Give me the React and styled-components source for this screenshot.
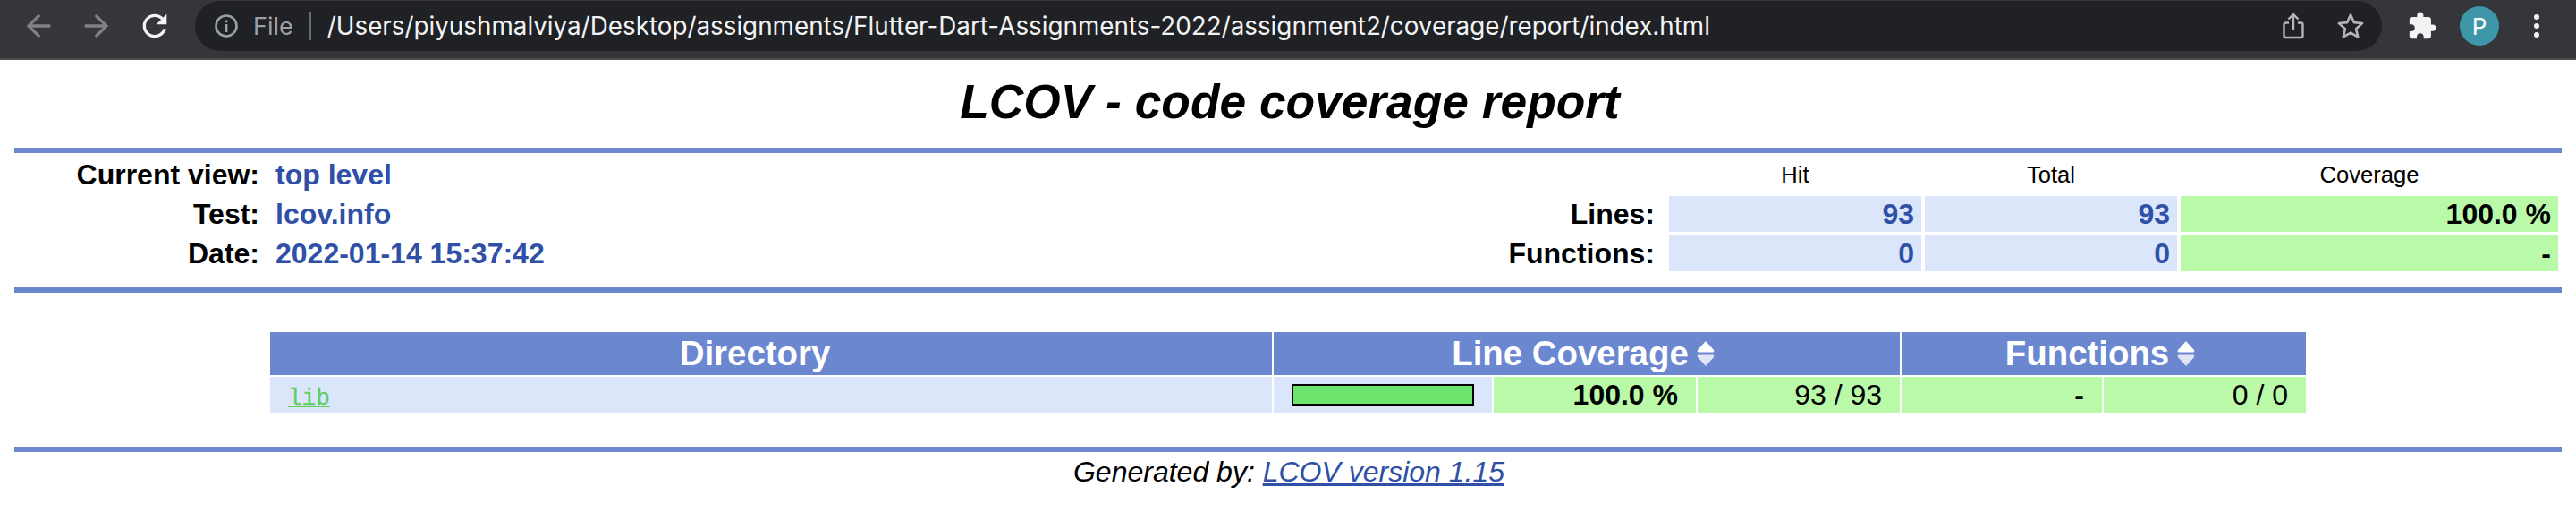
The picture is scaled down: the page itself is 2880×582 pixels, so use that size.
import React from "react";
import styled, { createGlobalStyle } from "styled-components";

const Global = createGlobalStyle`
  html, body { margin: 0; padding: 0; background: #fff; }
  body { font-family: "Liberation Sans", Arial, sans-serif; font-size: 32px; color: #000; }
`;

const C = {
  rule: "#6b87d0",
  light: "#dbe6fb",
  green: "#baf9a8",
  value: "#2f50a6",
};

/* ---------- browser toolbar ---------- */
const Toolbar = styled.header`
  display: flex;
  align-items: flex-start;
  height: 65px;
  background: #35363a;
  border-bottom: 2px solid #4a4b4e;
`;
const Nav = styled.nav`
  display: flex;
  align-items: center;
  gap: 25px;
  height: 58px;
  padding-left: 23px;
  width: 218px;
  box-sizing: border-box;
  flex: none;
`;
const NavIcon = styled.svg`
  width: 40px;
  height: 40px;
  flex: none;
  fill: ${(p) => (p.$on ? "#f1f3f4" : "#7f8184")};
`;
const Omnibox = styled.div`
  display: flex;
  align-items: center;
  width: 2445px;
  height: 56px;
  margin-top: 1px;
  flex: none;
  box-sizing: border-box;
  padding-left: 21px;
  border-radius: 28px;
  background: #202124;
`;
const InfoIcon = styled.svg`
  width: 28px;
  height: 28px;
  flex: none;
  color: #9aa0a6;
`;
const Scheme = styled.span`
  margin-left: 16px;
  font: 27px "Inter", "Liberation Sans", sans-serif;
  color: #9aa0a6;
`;
const Divider = styled.i`
  width: 2px;
  height: 32px;
  margin: 0 18px 0 18px;
  background: #6a6d70;
  flex: none;
`;
const Url = styled.span`
  flex: 1;
  font: 27.8px "Inter", "Liberation Sans", sans-serif;
  color: #f1f3f4;
  white-space: nowrap;
`;
const PillIcon = styled.svg`
  flex: none;
  color: #b4b5b7;
  margin-right: ${(p) => p.$mr}px;
`;
const Actions = styled.div`
  display: flex;
  align-items: center;
  height: 58px;
  padding-left: 28px;
`;
const Puzzle = styled.svg`
  width: 34px;
  height: 34px;
  fill: #f1f3f4;
  flex: none;
`;
const Avatar = styled.div`
  width: 44px;
  height: 44px;
  margin-left: 25px;
  border-radius: 50%;
  background: #3e97a9;
  color: #fff;
  font: 26px "Inter", sans-serif;
  display: flex;
  align-items: center;
  justify-content: center;
  flex: none;
`;
const Dots = styled.div`
  display: flex;
  flex-direction: column;
  gap: 4px;
  margin-left: 39px;
  & > i {
    width: 6px;
    height: 6px;
    border-radius: 50%;
    background: #f1f3f4;
  }
`;

/* ---------- report ---------- */
const Report = styled.main`
  padding: 0 16px;
`;
const Title = styled.h1`
  margin: 0;
  height: 98px;
  line-height: 94px;
  padding-left: 4px;
  box-sizing: border-box;
  text-align: center;
  font-size: 53.3px;
  font-weight: bold;
  font-style: italic;
`;
const Rule = styled.hr`
  margin: 0;
  border: 0;
  height: 6px;
  background: ${C.rule};
`;
const Summary = styled.section`
  display: flex;
  justify-content: space-between;
  height: 150px;
  box-sizing: border-box;
`;
const Meta = styled.dl`
  display: grid;
  grid-template-columns: 274px auto;
  grid-auto-rows: 44px;
  column-gap: 18px;
  margin: 0;
  padding-top: 2px;
  align-content: start;
`;
const MetaLabel = styled.dt`
  font-weight: bold;
  text-align: right;
  line-height: 44px;
`;
const MetaValue = styled.dd`
  margin: 0;
  font-weight: bold;
  color: ${C.value};
  line-height: 44px;
`;
const StatRowLabel = styled.div`
  font-weight: bold;
  line-height: 40px;
  text-align: right;
  margin-right: 12px;
`;
const StatGrid = styled.div`
  display: grid;
  grid-template-columns: 500px 282px 282px 422px;
  grid-template-rows: 40px 40px 40px;
  gap: 4px;
  padding-top: 4px;
  margin-right: 4px;
  align-content: start;
`;
const ColHead = styled.div`
  font-size: 25.6px;
  line-height: 40px;
  text-align: center;
`;
const Spacer = styled.div``;
const StatCell = styled.div`
  background: ${(p) => (p.$green ? C.green : C.light)};
  color: ${(p) => (p.$green ? "#000" : C.value)};
  font-weight: bold;
  line-height: 40px;
  text-align: right;
  padding-right: 8px;
`;

const DataWrap = styled.section`
  padding: 44px 0 38px;
`;
const DataTable = styled.div`
  display: grid;
  width: 2276px;
  margin: 0 auto;
  grid-template-columns: 1120px 244px 226px 226px 224px 226px;
  grid-template-rows: 48px 40px;
  gap: 2px;
`;
const Head = styled.div`
  grid-column: span ${(p) => p.$span || 1};
  padding-right: ${(p) => p.$shift}px;
  background: ${C.rule};
  color: #fff;
  font-weight: bold;
  font-size: 38.4px;
  display: flex;
  align-items: center;
  justify-content: center;
  gap: 9px;
  line-height: 48px;
`;
const Sort = styled.svg`
  width: 20px;
  height: 28px;
  flex: none;
`;
const NameCell = styled.div`
  background: ${C.light};
  padding-left: 20px;
  line-height: 40px;
`;
const Mono = styled.a`
  font: 26px "Liberation Mono", monospace;
  color: #5fcf5f;
  text-decoration: underline;
  text-decoration-thickness: 2px;
  -webkit-text-stroke: 0.3px #5fcf5f;
`;
const BarCell = styled.div`
  background: ${C.light};
  display: flex;
  align-items: center;
  justify-content: center;
`;
const Bar = styled.div`
  width: 204px;
  height: 24px;
  box-sizing: border-box;
  border: 2px solid #000;
  background: #6de46b;
`;
const NumCell = styled.div`
  background: ${C.green};
  text-align: right;
  padding-right: 20px;
  line-height: 40px;
  font-weight: ${(p) => (p.$bold ? "bold" : "normal")};
`;
const Footer = styled.footer`
  text-align: center;
  font-style: italic;
  line-height: 44px;
  padding-left: 2px;
  & a {
    color: ${C.value};
    text-decoration: underline;
  }
`;

const Arrow = ({ d }) => (
  <NavIcon viewBox="0 0 24 24">
    <path d={d} />
  </NavIcon>
);

const SortIcon = () => (
  <Sort viewBox="0 0 20 28">
    <path d="M10 0 L19 10 Q20 12 18 12.5 L2 12.5 Q0 12 1 10 Z" fill="#fff" />
    <path d="M10 28 L19 18 Q20 16 18 15.5 L2 15.5 Q0 16 1 18 Z" fill="#dfe5f5" />
  </Sort>
);

export default function App() {
  return (
    <>
      <Global />
      <Toolbar>
        <Nav>
          <Arrow d="M20 11H7.830l5.590-5.590L12 4l-8 8 8 8 1.410-1.410L7.830 13H20v-2z" />
          <Arrow d="M4 11h12.170l-5.590-5.590L12 4l8 8-8 8-1.410-1.410L16.170 13H4v-2z" />
          <NavIcon $on viewBox="0 0 24 24">
            <path d="M17.65 6.35C16.2 4.9 14.21 4 12 4c-4.42 0-7.99 3.58-7.99 8s3.57 8 7.99 8c3.73 0 6.84-2.55 7.73-6h-2.08c-.82 2.33-3.04 4-5.65 4-3.31 0-6-2.69-6-6s2.69-6 6-6c1.66 0 3.14.69 4.22 1.78L13 11h7V4l-2.35 2.35z" />
          </NavIcon>
        </Nav>
        <Omnibox>
          <InfoIcon viewBox="0 0 28 28" fill="none">
            <circle cx="14" cy="14" r="11.5" stroke="currentColor" strokeWidth="2.6" />
            <rect x="12.6" y="12" width="2.8" height="9" fill="currentColor" />
            <rect x="12.6" y="7.5" width="2.8" height="2.8" fill="currentColor" />
          </InfoIcon>
          <Scheme>File</Scheme>
          <Divider />
          <Url>/Users/piyushmalviya/Desktop/assignments/Flutter-Dart-Assignments-2022/assignment2/coverage/report/index.html</Url>
          <PillIcon $mr={36} width="24" height="30" viewBox="0 0 24 30" fill="none" stroke="currentColor" strokeWidth="2.4">
            <path d="M7 11.5H3.5a2 2 0 0 0-2 2V26a2 2 0 0 0 2 2h17a2 2 0 0 0 2-2V13.500a2 2 0 0 0-2-2H17" />
            <path d="M12 20V2.500M6.500 7.500L12 2l5.500 5.500" />
          </PillIcon>
          <PillIcon $mr={19} width="32" height="32" viewBox="0 0 32 32" fill="none" stroke="currentColor" strokeWidth="2.6" strokeLinejoin="round">
            <path d="M16 3.500l3.800 8.600 9.300.9-7 6.200 2.100 9.200-8.200-4.800-8.200 4.800 2.100-9.200-7-6.200 9.300-.9z" />
          </PillIcon>
        </Omnibox>
        <Actions>
          <Puzzle viewBox="0 0 24 24">
            <path d="M20.5 11H19V7c0-1.100-.9-2-2-2h-4V3.500C13 2.120 11.880 1 10.500 1S8 2.120 8 3.500V5H4c-1.100 0-1.990.9-1.990 2v3.800H3.500c1.490 0 2.700 1.210 2.700 2.700s-1.210 2.700-2.700 2.700H2V20c0 1.100.9 2 2 2h3.800v-1.500c0-1.490 1.210-2.700 2.700-2.700 1.490 0 2.700 1.210 2.700 2.700V22H17c1.100 0 2-.9 2-2v-4h1.500c1.380 0 2.500-1.120 2.500-2.500S21.880 11 20.500 11z" />
          </Puzzle>
          <Avatar>P</Avatar>
          <Dots>
            <i />
            <i />
            <i />
          </Dots>
        </Actions>
      </Toolbar>
      <Report>
        <Title>LCOV - code coverage report</Title>
        <Rule />
        <Summary>
          <Meta>
            <MetaLabel>Current view:</MetaLabel>
            <MetaValue>top level</MetaValue>
            <MetaLabel>Test:</MetaLabel>
            <MetaValue>lcov.info</MetaValue>
            <MetaLabel>Date:</MetaLabel>
            <MetaValue>2022-01-14 15:37:42</MetaValue>
          </Meta>
          <StatGrid>
            <Spacer />
            <ColHead>Hit</ColHead>
            <ColHead>Total</ColHead>
            <ColHead>Coverage</ColHead>
            <StatRowLabel>Lines:</StatRowLabel>
            <StatCell>93</StatCell>
            <StatCell>93</StatCell>
            <StatCell $green>100.0 %</StatCell>
            <StatRowLabel>Functions:</StatRowLabel>
            <StatCell>0</StatCell>
            <StatCell>0</StatCell>
            <StatCell $green>-</StatCell>
          </StatGrid>
        </Summary>
        <Rule />
        <DataWrap>
          <DataTable>
            <Head $shift={36}>Directory</Head>
            <Head $span={3} $shift={8}>
              Line Coverage
              <SortIcon />
            </Head>
            <Head $span={2} $shift={8}>
              Functions
              <SortIcon />
            </Head>
            <NameCell>
              <Mono href="#lib">lib</Mono>
            </NameCell>
            <BarCell>
              <Bar />
            </BarCell>
            <NumCell $bold>100.0 %</NumCell>
            <NumCell>93 / 93</NumCell>
            <NumCell $bold>-</NumCell>
            <NumCell>0 / 0</NumCell>
          </DataTable>
        </DataWrap>
        <Rule />
        <Footer>
          Generated by: <a href="#lcov">LCOV version 1.15</a>
        </Footer>
      </Report>
    </>
  );
}
